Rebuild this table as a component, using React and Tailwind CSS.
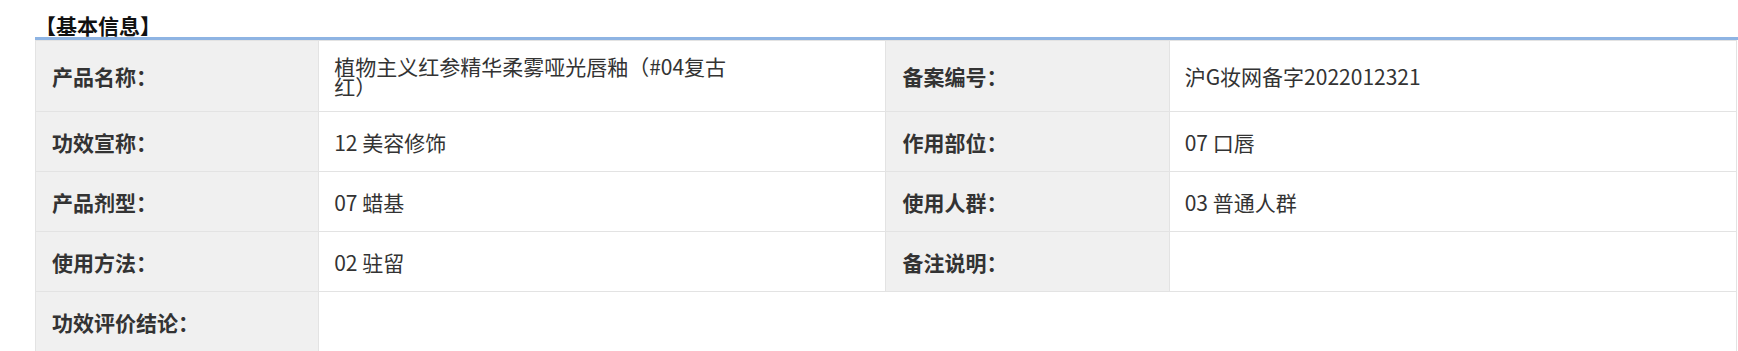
import React from "react";

const rows = [
  [
    { label: "产品名称：", value: "植物主义红参精华柔雾哑光唇釉（#04复古红）", narrow: true },
    { label: "备案编号：", value: "沪G妆网备字2022012321" },
  ],
  [
    { label: "功效宣称：", value: "12 美容修饰" },
    { label: "作用部位：", value: "07 口唇" },
  ],
  [
    { label: "产品剂型：", value: "07 蜡基" },
    { label: "使用人群：", value: "03 普通人群" },
  ],
  [
    { label: "使用方法：", value: "02 驻留" },
    { label: "备注说明：", value: "" },
  ],
];

const labelCls =
  "w-[283px] h-[60px] px-[16px] py-[15px] bg-[#f0f0f0] border border-[#e3e3e3] font-bold text-left align-middle";
const valueCls =
  "w-[567px] h-[60px] px-[15px] py-[15px] bg-white border border-[#e3e3e3] text-left align-middle";

export default function App() {
  return (
    <div
      className="w-[1738px] h-[351px] overflow-hidden bg-white text-[#333] pl-[35px]"
      style={{ fontFamily: '"Noto Sans CJK SC", "Noto Sans", sans-serif' }}
    >
      <div className="h-[37px] flex items-end">
        <h3 className="text-[21px] leading-[24px] font-bold text-[#111]">【基本信息】</h3>
      </div>
      <div className="h-[3px] bg-[#8eb4e3] w-[1703px]" />
      <table className="w-[1702px] border-collapse table-fixed text-[21px] leading-[20px]">
        <tbody>
          {rows.map((row, i) => (
            <tr key={i}>
              {row.map((cell) => (
                <React.Fragment key={cell.label}>
                  <th className={labelCls}>{cell.label}</th>
                  <td className={valueCls}>
                    {cell.narrow ? <div className="w-[400px]">{cell.value}</div> : cell.value}
                  </td>
                </React.Fragment>
              ))}
            </tr>
          ))}
          <tr>
            <th className={labelCls}>功效评价结论：</th>
            <td colSpan={3} className={valueCls}></td>
          </tr>
        </tbody>
      </table>
    </div>
  );
}
